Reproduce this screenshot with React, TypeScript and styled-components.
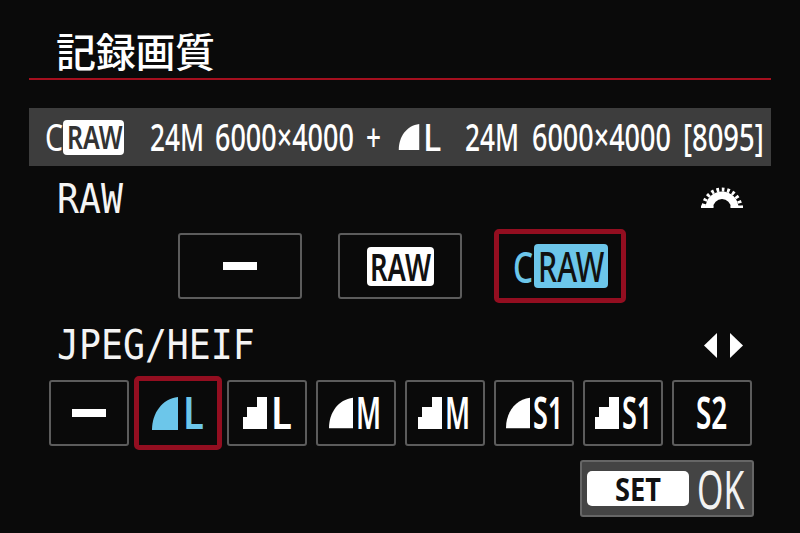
import React from "react";
import styled, { createGlobalStyle } from "styled-components";

const Global = createGlobalStyle`
  html, body { margin: 0; padding: 0; background: #0a0a0a; }
  body { font-family: "Noto Sans", "Noto Sans CJK JP", sans-serif; color: #fff; }
`;
const Screen = styled.div`
  width: 800px; height: 533px; overflow: hidden; background: #0a0a0a;
  display: flex; flex-direction: column;
`;
const Header = styled.header`
  height: 78px; margin: 0 29px; padding-left: 27px; box-sizing: content-box;
  border-bottom: 2px solid #a50f1e; display: flex; align-items: flex-start;
`;
const Title = styled.h1`
  margin: 27px 0 0; font: 500 40px/46px "Noto Sans CJK JP", sans-serif; color: #fff; letter-spacing: -0.3px;
`;
const InfoBar = styled.div`
  height: 58px; margin: 28px 29px 0; padding-left: 16px; background: #3d3d3d;
  display: flex; align-items: center;
`;
const Narrow = styled.span<{ $w: number; $sx?: number; $size?: number; $ml?: number; $mb?: number; $color?: string; $weight?: number }>`
  display: inline-block; flex: none; white-space: nowrap;
  width: ${(p) => p.$w}px; margin-left: ${(p) => p.$ml ?? 0}px; margin-bottom: ${(p) => p.$mb ?? 0}px;
  font-family: "Noto Sans", sans-serif;
  font-size: ${(p) => p.$size ?? 38}px; line-height: 1;
  font-weight: ${(p) => p.$weight ?? 500};
  color: ${(p) => p.$color ?? "#fff"};
  transform: scaleX(${(p) => p.$sx ?? 0.69}); transform-origin: left center;
`;
const Pill = styled.span<{ $w: number; $h: number; $bg: string; $ml?: number }>`
  flex: none; display: flex; align-items: center; justify-content: center;
  width: ${(p) => p.$w}px; height: ${(p) => p.$h}px; margin-left: ${(p) => p.$ml ?? 0}px;
  background: ${(p) => p.$bg}; border-radius: 4px;
`;
const LabelRow = styled.div<{ $h: number; $pt: number }>`
  height: ${(p) => p.$h}px; box-sizing: border-box; padding: ${(p) => p.$pt}px 57px 0;
  display: flex; align-items: center; justify-content: space-between;
`;
const Label = styled.span<{ $w: number }>`
  display: inline-block; width: ${(p) => p.$w}px; white-space: nowrap;
  font: 400 41px/1 "DejaVu Sans Mono", monospace; color: #f4f4f4;
  transform: scaleX(0.89); transform-origin: left center;
`;
const TileRow = styled.div<{ $gap: number; $cols: number; $w: number }>`
  height: 66px; display: grid; justify-content: center;
  grid-template-columns: repeat(${(p) => p.$cols}, ${(p) => p.$w}px);
  gap: ${(p) => p.$gap}px;
`;
const Tile = styled.div<{ $on?: boolean }>`
  box-sizing: border-box; display: flex; align-items: center; justify-content: center;
  margin: ${(p) => (p.$on ? "-4px" : "0")};
  border: ${(p) => (p.$on ? "5px solid #930e20" : "2px solid #5c5c5c")};
  border-radius: ${(p) => (p.$on ? 5 : 3)}px;
`;
const Dash = styled.span`
  display: block; width: 34px; height: 8px; background: #fff;
`;
const Footer = styled.div`
  margin-top: 14px; padding-right: 46px; display: flex; justify-content: flex-end;
`;
const OkButton = styled.div`
  box-sizing: border-box; width: 174px; height: 57px; padding-left: 5px;
  background: #444; border: 2px solid #666; border-radius: 3px;
  display: flex; align-items: center;
`;
const SetKey = styled.span`
  width: 102px; height: 35px; background: #fff; border-radius: 5px; flex: none;
  display: flex; align-items: center; justify-content: center;
`;
const Glyph = styled.svg<{ $ml?: number; $mb?: number }>`
  flex: none; display: block;
  margin-left: ${(p) => p.$ml ?? 0}px; margin-bottom: ${(p) => p.$mb ?? 0}px;
`;

const BLUE = "#6cc6ea";
const Dome = ({ w, h, c = "#fff", ml }: { w: number; h: number; c?: string; ml?: number }) => (
  <Glyph $ml={ml} width={w} height={h} viewBox="0 0 26 33">
    <path d="M0 33C0 16 10 2 26 0V33Z" fill={c} />
  </Glyph>
);
const Steps = () => (
  <Glyph width={24} height={32} viewBox="0 0 24 32">
    <path d="M0 32V20H4V10H14V0H24V32Z" fill="#fff" />
  </Glyph>
);
const Gear = () => (
  <Glyph $mb={4} width="42" height="21" viewBox="0 0 42 21">
    <path d="M4.5 21A16.5 16.5 0 0 1 37.5 21H30A9 9 0 0 0 12 21Z" fill="#fff" />
    <circle cx="21" cy="21" r="18.5" fill="none" stroke="#fff" strokeWidth="4" strokeDasharray="2.7 2.7" />
    <rect x="0" y="18.5" width="12.5" height="2.5" fill="#fff" />
    <rect x="29.5" y="18.5" width="12.5" height="2.5" fill="#fff" />
  </Glyph>
);
const Arrows = () => (
  <Glyph width="40" height="26" viewBox="0 0 40 26">
    <path d="M14 0V25L1 12.5Z" fill="#fff" />
    <path d="M27 0V25L40 12.5Z" fill="#fff" />
  </Glyph>
);

const Size = ({ t, w, sx = 0.62, ml = 4, c }: { t: string; w: number; sx?: number; ml?: number; c?: string }) => (
  <Narrow $size={45} $sx={sx} $w={w} $ml={ml} $mb={3} $color={c} $weight={600}>{t}</Narrow>
);

export default function App() {
  return (
    <Screen>
      <Global />
      <Header><Title>記録画質</Title></Header>
      <InfoBar>
        <Narrow $size={38} $w={18} $mb={2} $sx={0.75} $weight={400}>C</Narrow>
        <Pill $w={61} $h={35} $bg="#fff">
          <Narrow $size={32} $w={54} $sx={0.78} $color="#333" $weight={600}>RAW</Narrow>
        </Pill>
        <Narrow $w={53} $ml={26} $mb={2}>24M</Narrow>
        <Narrow $w={137} $ml={12} $mb={2} $sx={0.71}>6000×4000</Narrow>
        <Narrow $w={13} $ml={14} $mb={2}>+</Narrow>
        <Dome w={22} h={26} ml={19} />
        <Narrow $w={16} $ml={3} $mb={2} $sx={0.9}>L</Narrow>
        <Narrow $w={53} $ml={26} $mb={2}>24M</Narrow>
        <Narrow $w={137} $ml={14} $mb={2} $sx={0.71}>6000×4000</Narrow>
        <Narrow $w={79} $ml={14} $mb={2} $sx={0.72}>[8095]</Narrow>
      </InfoBar>
      <LabelRow $h={67} $pt={0}>
        <Label $w={64}>RAW</Label>
        <Gear />
      </LabelRow>
      <TileRow $gap={36} $cols={3} $w={124}>
        <Tile><Dash /></Tile>
        <Tile>
          <Pill $w={67} $h={39} $bg="#fff">
            <Narrow $size={38} $w={60} $sx={0.72} $color="#111" $weight={600}>RAW</Narrow>
          </Pill>
        </Tile>
        <Tile $on>
          <Narrow $size={44} $w={21} $sx={0.72} $color={BLUE} $weight={500}>C</Narrow>
          <Pill $w={74} $h={44} $bg={BLUE}>
            <Narrow $size={41} $w={65} $sx={0.74} $color="#111" $weight={500}>RAW</Narrow>
          </Pill>
        </Tile>
      </TileRow>
      <LabelRow $h={81} $pt={12}>
        <Label $w={197}>JPEG/HEIF</Label>
        <Arrows />
      </LabelRow>
      <TileRow $gap={9} $cols={8} $w={80}>
        <Tile><Dash /></Tile>
        <Tile $on><Dome w={26} h={33} c={BLUE} /><Size t="L" w={20} sx={0.85} ml={5} c={BLUE} /></Tile>
        <Tile><Steps /><Size t="L" w={20} sx={0.85} ml={4} /></Tile>
        <Tile><Dome w={24} h={32} /><Size t="M" w={26} ml={3} sx={0.6} /></Tile>
        <Tile><Steps /><Size t="M" w={26} ml={3} sx={0.6} /></Tile>
        <Tile><Dome w={24} h={32} /><Size t="S1" w={28} ml={3} sx={0.6} /></Tile>
        <Tile><Steps /><Size t="S1" w={28} ml={3} sx={0.6} /></Tile>
        <Tile><Size t="S2" w={31} ml={0} sx={0.62} /></Tile>
      </TileRow>
      <Footer>
        <OkButton>
          <SetKey><Narrow $size={32} $w={47} $sx={0.85} $color="#111" $weight={700}>SET</Narrow></SetKey>
          <Narrow $size={52} $w={48} $ml={8} $sx={0.65} $color="#f2f2f2" $weight={400}>OK</Narrow>
        </OkButton>
      </Footer>
    </Screen>
  );
}
